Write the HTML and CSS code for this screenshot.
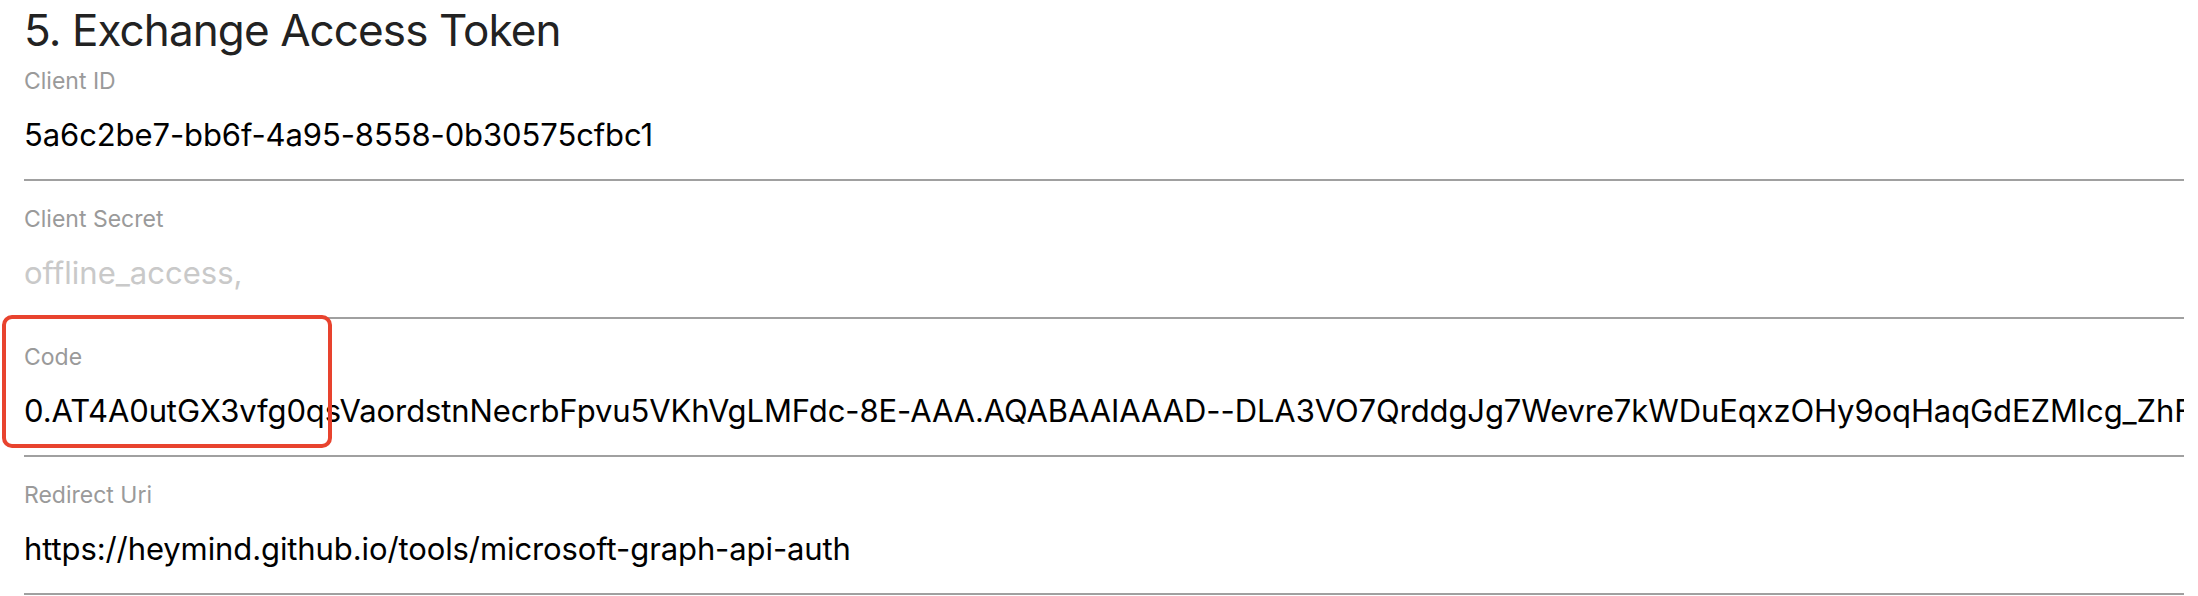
FILE: index.html
```html
<!DOCTYPE html>
<html lang="en">
<head>
<meta charset="utf-8">
<title>Exchange Access Token</title>
<link rel="stylesheet" href="styles.css">
</head>
<body>
<section class="panel">
  <h1 class="title">5. Exchange Access Token</h1>
  <div class="field">
    <label class="label">Client ID</label>
    <div class="value">5a6c2be7-bb6f-4a95-8558-0b30575cfbc1</div>
  </div>
  <div class="field">
    <label class="label">Client Secret</label>
    <div class="value placeholder">offline_access,</div>
  </div>
  <div class="field highlighted">
    <label class="label">Code</label>
    <div class="value">0.AT4A0utGX3vfg0qsVaordstnNecrbFpvu5VKhVgLMFdc-8E-AAA.AQABAAIAAAD--DLA3VO7QrddgJg7Wevre7kWDuEqxzOHy9oqHaqGdEZMIcg_ZhFqTnR2xWkLpVb8sYc3uMdQeA</div>
    <span class="mark"></span>
  </div>
  <div class="field">
    <label class="label">Redirect Uri</label>
    <div class="value">https://heymind.github.io/tools/microsoft-graph-api-auth</div>
  </div>
</section>
</body>
</html>
```
FILE: styles.css
```css
html, body {
  margin: 0;
  padding: 0;
  background: #ffffff;
}

body {
  font-family: "Inter", "Liberation Sans", sans-serif;
}

.panel {
  display: flex;
  flex-direction: column;
  padding: 2px 14px 0 24px;
}

.title {
  margin: 0 0 9px 0;
  font-size: 44px;
  line-height: 56px;
  font-weight: 400;
  color: #222222;
  letter-spacing: -0.9px;
}

.field {
  position: relative;
  display: flex;
  flex-direction: column;
  gap: 20px;
  padding-bottom: 24px;
  border-bottom: 2px solid #a0a0a0;
}

.field + .field {
  padding-top: 24px;
}

.label {
  font-size: 23px;
  line-height: 28px;
  color: #9a9a9a;
}

.value {
  font-size: 31px;
  line-height: 40px;
  color: #000000;
  letter-spacing: -0.1px;
  white-space: nowrap;
  overflow: hidden;
}

.placeholder {
  color: #c9c9c9;
  letter-spacing: 0;
}

.mark {
  position: absolute;
  left: -22px;
  top: -4px;
  width: 322px;
  height: 125px;
  border: 4px solid #e8432e;
  border-radius: 10px;
  pointer-events: none;
}
```
